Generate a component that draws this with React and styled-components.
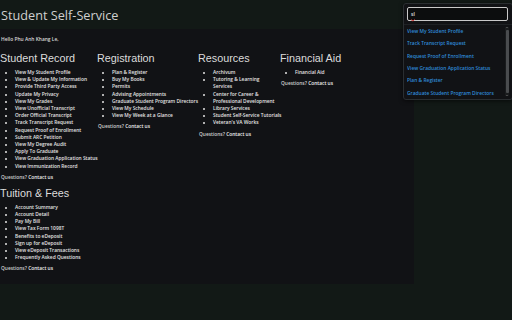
import React from "react"
import styled, { createGlobalStyle } from "styled-components"

const GlobalStyle = createGlobalStyle`
    html, body {
        margin: 0;
        padding: 0;
        background: #121916;
        font-family: "Open Sans", "Liberation Sans", sans-serif;
    }
`

const Page = styled.div`
    position: relative;
    width: 512px;
    height: 320px;
    overflow: hidden;
`

const Header = styled.header`
    height: 29px;
    display: flex;
    align-items: center;
    padding-left: 1px;
`

const Title = styled.h1`
    margin: 0;
    font-size: 12.7px;
    font-weight: 400;
    color: #cfcfcf;
    line-height: 1;
    transform: translateY(1px);
`

const Panel = styled.main`
    width: 414px;
    background: #111215;
    padding: 7px 0 12px;
`

const Greeting = styled.p`
    margin: 0 0 10px 1px;
    font-size: 4.9px;
    font-weight: 600;
    color: #d8d8d8;
    line-height: 6px;
`

const Sections = styled.div`
    display: flex;
    flex-wrap: wrap;
    row-gap: 6px;
`

const Section = styled.section`
    width: ${({ width }) => width}px;
`

const Heading = styled.h2`
    margin: 0;
    font-family: "Liberation Sans", Arial, sans-serif;
    font-size: 10.8px;
    font-weight: 400;
    line-height: 12px;
    color: #dcdcdc;
`

const List = styled.ul`
    margin: 5px 0 0;
    padding-left: 15px;
    list-style: disc;
`

const Item = styled.li`
    font-size: 4.85px;
    font-weight: 600;
    line-height: 7.2px;
    color: #e4e4e4;
    white-space: nowrap;
`

const Questions = styled.p`
    margin: 4px 0 0 1px;
    font-size: 4.85px;
    font-weight: 600;
    line-height: 7px;
    color: #d0d0d0;
    white-space: nowrap;
    span {
        color: #f0f0f0;
    }
`

const Popup = styled.div`
    position: absolute;
    top: 3px;
    left: 403px;
    width: 108px;
    height: 95px;
    background: #111215;
    border: 1px solid #2a2e31;
    border-radius: 3px;
    display: flex;
    flex-direction: column;
    box-shadow: 0 1px 4px rgba(0, 0, 0, 0.6);
`

const SearchBox = styled.div`
    margin: 3px 4px 3px 3px;
    height: 12px;
    border: 1px solid #c9c9c9;
    border-radius: 2px;
    background: #0c0d0e;
    display: flex;
    align-items: center;
    padding-left: 3px;
    font-size: 5px;
    font-weight: 600;
    color: #e0e0e0;
    span {
        text-decoration: underline wavy #d03030;
        text-decoration-thickness: 0.6px;
    }
`

const Results = styled.div`
    flex: 1;
    display: flex;
    border-top: 1px solid #1e2124;
    min-height: 0;
`

const ResultList = styled.div`
    flex: 1;
    display: flex;
    flex-direction: column;
    padding: 0 0 0 3px;
`

const Result = styled.a`
    display: block;
    font-size: 4.9px;
    font-weight: 600;
    line-height: 12.4px;
    color: #2f8bd8;
    text-decoration: none;
    white-space: nowrap;
    overflow: hidden;
`

const Scrollbar = styled.div`
    width: 4px;
    margin: 2px 3px 3px 0;
    background: #1a1c1e;
    display: flex;
    flex-direction: column;
    align-items: center;
    justify-content: space-between;
`

const Thumb = styled.div`
    width: 3px;
    flex: 1;
    margin: 2px 0;
    background: #4a4c4f;
    border-radius: 1px;
`

const Arrow = styled.div`
    width: 0;
    height: 0;
    border-left: 1px solid transparent;
    border-right: 1px solid transparent;
    ${({ down }) => down
        ? "border-top: 1px solid #777;"
        : "border-bottom: 1px solid #777;"}
`

const sections = [
    {
        title: "Student Record",
        width: 97,
        items: [
            "View My Student Profile",
            "View & Update My Information",
            "Provide Third Party Access",
            "Update My Privacy",
            "View My Grades",
            "View Unofficial Transcript",
            "Order Official Transcript",
            "Track Transcript Request",
            "Request Proof of Enrollment",
            "Submit ARC Petition",
            "View My Degree Audit",
            "Apply To Graduate",
            "View Graduation Application Status",
            "View Immunization Record"
        ]
    },
    {
        title: "Registration",
        width: 101,
        items: [
            "Plan & Register",
            "Buy My Books",
            "Permits",
            "Advising Appointments",
            "Graduate Student Program Directors",
            "View My Schedule",
            "View My Week at a Glance"
        ]
    },
    {
        title: "Resources",
        width: 82,
        items: [
            "Archivum",
            ["Tutoring & Learning", "Services"],
            ["Center for Career &", "Professional Development"],
            "Library Services",
            "Student Self-Service Tutorials",
            "Veteran's VA Works"
        ]
    },
    {
        title: "Financial Aid",
        width: 134,
        items: ["Financial Aid"]
    },
    {
        title: "Tuition & Fees",
        width: 200,
        items: [
            "Account Summary",
            "Account Detail",
            "Pay My Bill",
            "View Tax Form 1098T",
            "Benefits to eDeposit",
            "Sign up for eDeposit",
            "View eDeposit Transactions",
            "Frequently Asked Questions"
        ]
    }
]

const results = [
    "View My Student Profile",
    "Track Transcript Request",
    "Request Proof of Enrollment",
    "View Graduation Application Status",
    "Plan & Register",
    "Graduate Student Program Directors"
]

export default function App() {
    return <>
        <GlobalStyle />
        <Page>
            <Header>
                <Title>Student Self-Service</Title>
            </Header>
            <Panel>
                <Greeting>Hello Phu Anh Khang Le,</Greeting>
                <Sections>
                    {sections.map(section =>
                        <Section key={section.title} width={section.width}>
                            <Heading>{section.title}</Heading>
                            <List>
                                {section.items.map(item =>
                                    Array.isArray(item)
                                        ? <Item key={item[0]}>{item[0]}<br />{item[1]}</Item>
                                        : <Item key={item}>{item}</Item>
                                )}
                            </List>
                            <Questions>Questions? <span>Contact us</span></Questions>
                        </Section>
                    )}
                </Sections>
            </Panel>
            <Popup>
                <SearchBox><span>sl</span></SearchBox>
                <Results>
                    <ResultList>
                        {results.map(r => <Result key={r}>{r}</Result>)}
                    </ResultList>
                    <Scrollbar>
                        <Arrow />
                        <Thumb />
                        <Arrow down />
                    </Scrollbar>
                </Results>
            </Popup>
        </Page>
    </>
}
